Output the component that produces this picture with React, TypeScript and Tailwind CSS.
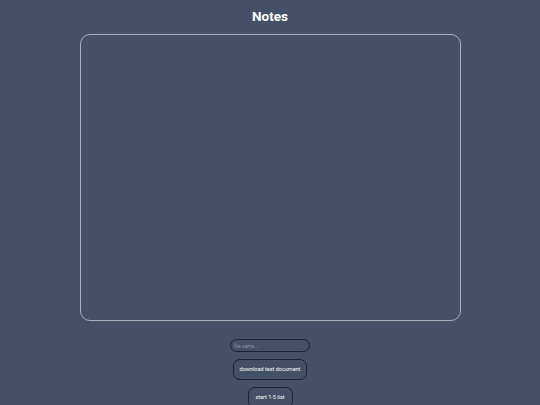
export default function App() {
  return (
    <div className="min-h-[405px] w-full bg-[#435068] font-['Roboto','Liberation_Sans',sans-serif] flex flex-col items-center">
      <h1 className="pt-[8px] text-[13.5px] leading-[16px] font-bold text-white">Notes</h1>

      <textarea
        className="mt-[10px] w-[381px] h-[287px] rounded-[10px] border border-[#a8b0bc] bg-transparent resize-none outline-none"
      />

      <input
        placeholder="file name..."
        className="mt-[18px] w-[80px] h-[13px] rounded-full border-[1.5px] border-[#1a2130] bg-transparent px-[3px] text-[5px] text-white placeholder:text-[#8c96a6] outline-none"
      />

      <button className="mt-[7px] w-[74px] h-[21px] rounded-[7px] border-[1.5px] border-[#1a2130] text-[5.5px] text-white">
        download test document
      </button>

      <button className="mt-[7px] w-[45px] h-[21px] rounded-[7px] border-[1.5px] border-[#1a2130] text-[5.5px] text-white">
        start 1-5 list
      </button>
    </div>
  );
}
